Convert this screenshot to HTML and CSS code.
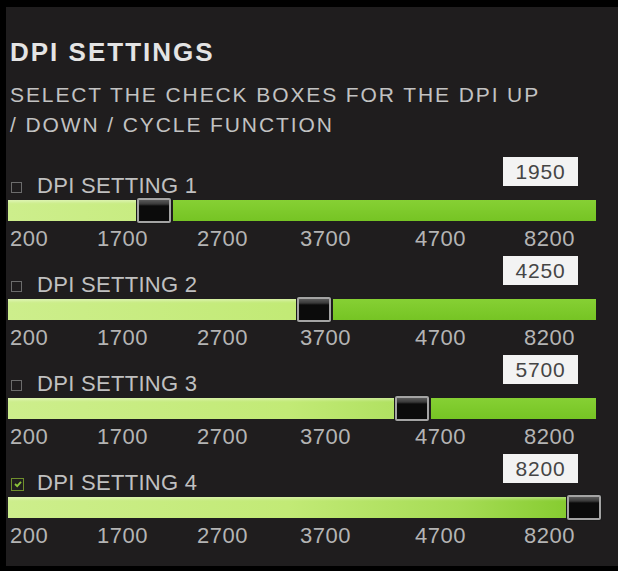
FILE: index.html
```html
<!DOCTYPE html>
<html>
<head>
<meta charset="utf-8">
<link rel="stylesheet" href="styles.css">
</head>
<body>
<div class="panel">
  <h1 class="title">DPI SETTINGS</h1>
  <p class="subtitle">SELECT THE CHECK BOXES FOR THE DPI UP<br>/ DOWN / CYCLE FUNCTION</p>

  <div class="setting">
    <div class="head">
      <label class="label"><span class="check"></span>DPI SETTING 1</label>
      <div class="value">1950</div>
    </div>
    <div class="track">
      <div class="fill" style="width:129px"></div>
      <div class="thumb"></div>
      <div class="rest"></div>
    </div>
    <div class="ticks"><span>200</span><span>1700</span><span>2700</span><span>3700</span><span>4700</span><span>8200</span></div>
  </div>

  <div class="setting">
    <div class="head">
      <label class="label"><span class="check"></span>DPI SETTING 2</label>
      <div class="value">4250</div>
    </div>
    <div class="track">
      <div class="fill" style="width:289px"></div>
      <div class="thumb"></div>
      <div class="rest"></div>
    </div>
    <div class="ticks"><span>200</span><span>1700</span><span>2700</span><span>3700</span><span>4700</span><span>8200</span></div>
  </div>

  <div class="setting">
    <div class="head">
      <label class="label"><span class="check"></span>DPI SETTING 3</label>
      <div class="value">5700</div>
    </div>
    <div class="track">
      <div class="fill" style="width:387px"></div>
      <div class="thumb"></div>
      <div class="rest"></div>
    </div>
    <div class="ticks"><span>200</span><span>1700</span><span>2700</span><span>3700</span><span>4700</span><span>8200</span></div>
  </div>

  <div class="setting">
    <div class="head">
      <label class="label"><span class="check checked"><svg viewBox="0 0 10 10" width="10" height="10"><path d="M2 5 L4.2 7.2 L8 2.8" fill="none" stroke="#8cc43a" stroke-width="1.8"/></svg></span>DPI SETTING 4</label>
      <div class="value">8200</div>
    </div>
    <div class="track">
      <div class="fill" style="width:559px"></div>
      <div class="thumb"></div>
      <div class="rest"></div>
    </div>
    <div class="ticks"><span>200</span><span>1700</span><span>2700</span><span>3700</span><span>4700</span><span>8200</span></div>
  </div>
</div>
</body>
</html>
```

FILE: styles.css
```css
html {
  margin: 0;
  padding: 0;
  background: #1f1d1e;
}
body {
  margin: 0;
  height: 571px;
  box-sizing: border-box;
  overflow: hidden;
  border-top: 7px solid #000;
  border-left: 6px solid #000;
  border-bottom: 5px solid #000;
  background: #1f1d1e;
  font-family: "Liberation Sans", Arial, sans-serif;
}
.panel {
  padding: 30px 0 0 4px;
  color: #c4c4c4;
}
.title {
  margin: 0;
  font-size: 26px;
  line-height: 30px;
  font-weight: bold;
  letter-spacing: 2px;
  color: #e4e4e4;
}
.subtitle {
  margin: 13px 0 0;
  font-size: 21px;
  line-height: 30px;
  letter-spacing: 1.9px;
  color: #c2c2c2;
}
.setting {
  height: 99px;
}
.subtitle + .setting {
  margin-top: 17px;
}
.head {
  display: flex;
  justify-content: space-between;
  align-items: flex-end;
  width: 568px;
  height: 41px;
}
.label {
  display: flex;
  align-items: center;
  font-size: 22px;
  line-height: 24px;
  letter-spacing: 0.3px;
  color: #c0c0c0;
  white-space: nowrap;
}
.check {
  flex: none;
  width: 9px;
  height: 9px;
  border: 1.5px solid #6c6c6c;
  margin: 2px 15px 0 1px;
  display: flex;
  align-items: center;
  justify-content: center;
}
.check.checked {
  border-color: #6f8f2c;
  width: 11px;
  height: 11px;
  margin-right: 13px;
}
.value {
  flex: none;
  width: 75px;
  height: 29px;
  box-sizing: border-box;
  margin-bottom: 12px;
  background: #f3f3f3;
  color: #454545;
  font-size: 21px;
  line-height: 29px;
  text-align: center;
  letter-spacing: 0.8px;
}
.track {
  display: flex;
  align-items: center;
  width: 588px;
  height: 21px;
  margin: 2px 0 0 -2px;
}
.fill {
  height: 100%;
  flex: none;
  background: linear-gradient(to right, #cdee8c 0px, #c2ea76 280px, #a6dc55 450px, #86cc30 560px);
  box-shadow: inset 0 4px 3px -2px rgba(255,255,255,0.35);
}
.thumb {
  flex: none;
  width: 34px;
  height: 25px;
  box-sizing: border-box;
  border: 2px solid #a4a4a4;
  border-radius: 2px;
  background: linear-gradient(#5a5a5a 0, #3a3a3a 4px, #0b0b0b 6px, #0b0b0b 100%);
  box-shadow: 0 0 0 1px #1a1a1a;
}
.rest {
  flex: 1;
  min-width: 0;
  height: 100%;
  margin-left: 2px;
  background: linear-gradient(#86d034, #76c424);
}
.ticks {
  display: grid;
  grid-template-columns: 87px 100px 103px 115px 109px auto;
  margin-top: 6px;
  font-size: 22px;
  line-height: 24px;
  letter-spacing: 0.5px;
  color: #b4b4b4;
}
```
